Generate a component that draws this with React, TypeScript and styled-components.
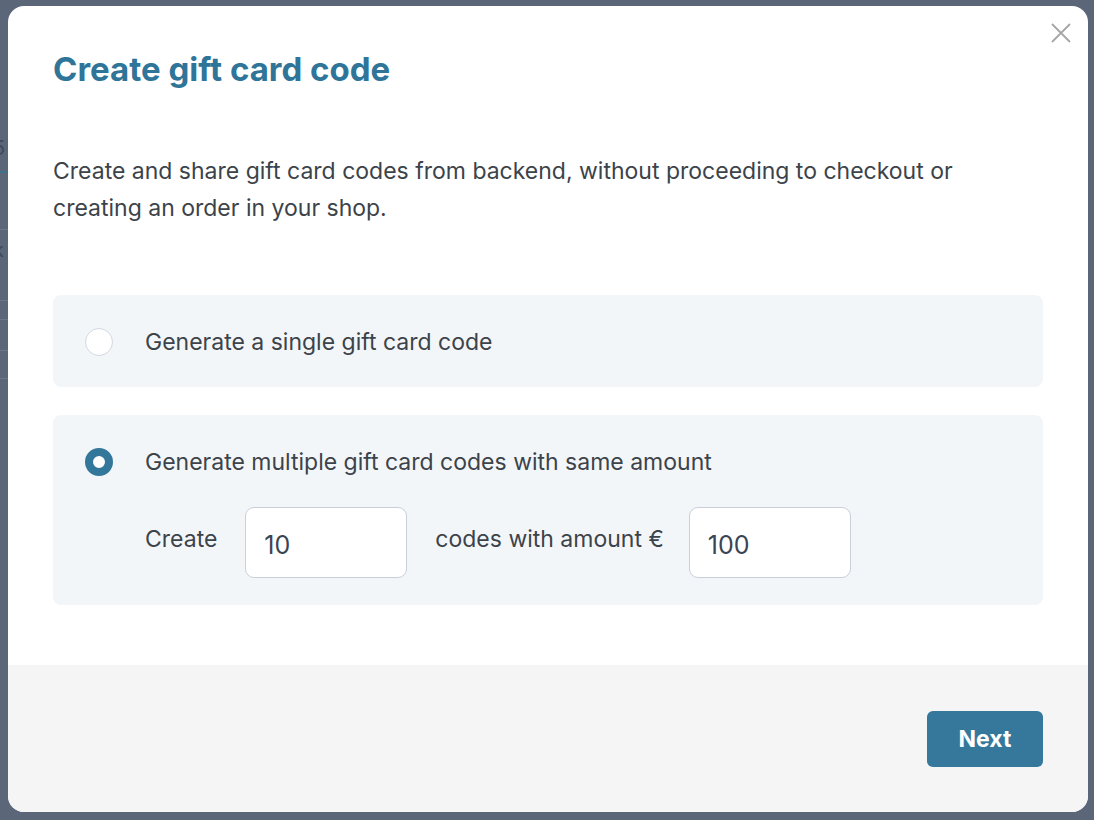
import React, { useState } from "react";
import styled, { createGlobalStyle } from "styled-components";

const GlobalStyle = createGlobalStyle`
  html, body {
    margin: 0;
    padding: 0;
    background: #5e6a7b;
    font-family: Inter, "Noto Sans", "Liberation Sans", sans-serif;
  }
  * { box-sizing: border-box; }
`;

const Backdrop = styled.div`
  width: 1094px;
  height: 820px;
  display: flex;
  flex-direction: row;
  align-items: flex-start;
  padding-top: 6px;
  background: #5b6779;
  overflow: hidden;
`;

const PageStrip = styled.div`
  width: 8px;
  flex-shrink: 0;
  display: flex;
  flex-direction: column;
  overflow: hidden;
  margin-top: 122px;
  color: #3f4a5a;
  font-size: 20px;
`;

const StripText = styled.span<{ $pad: number }>`
  display: block;
  margin-left: -7px;
  height: ${(p) => p.$pad}px;
  line-height: 40px;
`;

const StripLine = styled.div<{ $gap: number; $color?: string; $h?: number }>`
  margin-top: ${(p) => p.$gap}px;
  height: ${(p) => p.$h ?? 1}px;
  background: ${(p) => p.$color ?? "#6b7686"};
`;

const Modal = styled.div`
  width: 1080px;
  height: 806px;
  background: #ffffff;
  border-radius: 16px;
  display: flex;
  flex-direction: column;
  overflow: hidden;
  position: relative;
`;

const CloseButton = styled.button`
  position: absolute;
  top: 14px;
  right: 14px;
  width: 26px;
  height: 26px;
  padding: 0;
  border: none;
  background: transparent;
  display: flex;
  align-items: center;
  justify-content: center;
  cursor: pointer;
`;

const Body = styled.div`
  flex: 1;
  padding: 43px 45px 0 45px;
  display: flex;
  flex-direction: column;
`;

const Title = styled.h1`
  margin: 0;
  font-size: 33px;
  line-height: 40px;
  font-weight: 700;
  color: #2f7599;
`;

const Description = styled.p`
  margin: 64px 0 0 0;
  font-size: 23px;
  line-height: 37px;
  color: #3c434a;
  max-width: 930px;
`;

const Options = styled.div`
  margin-top: 68px;
  display: flex;
  flex-direction: column;
  gap: 28px;
`;

const OptionCard = styled.div`
  background: #f3f6f9;
  border-radius: 8px;
  padding: 33px 32px 31px 32px;
  display: flex;
  flex-direction: column;
  gap: 31px;
`;

const OptionRow = styled.label`
  display: flex;
  align-items: center;
  gap: 32px;
  cursor: pointer;
  font-size: 23px;
  line-height: 28px;
  color: #3c434a;
`;

const Radio = styled.span<{ $checked: boolean }>`
  width: 28px;
  height: 28px;
  border-radius: 50%;
  flex-shrink: 0;
  background: #ffffff;
  border: ${(p) => (p.$checked ? "8px solid #33779b" : "1px solid #d2d8e2")};
`;

const AmountRow = styled.div`
  display: flex;
  align-items: center;
  padding-left: 60px;
  margin-bottom: -4px;
  font-size: 23px;
  color: #3c434a;
  gap: 28px;
`;

const AmountLabel = styled.span<{ $tight?: boolean }>`
  margin-top: -8px;
  margin-right: ${(p) => (p.$tight ? "-3px" : "0")};
`;

const AmountInput = styled.input`
  width: 162px;
  height: 71px;
  border: 1px solid #c9cfdb;
  border-radius: 9px;
  background: #fff;
  padding: 4px 18px 0 18px;
  font-family: inherit;
  font-size: 25px;
  color: #3a4553;
  outline: none;
`;

const Footer = styled.div`
  height: 147px;
  background: #f5f5f5;
  display: flex;
  justify-content: flex-end;
  align-items: flex-start;
  padding: 46px 45px 0 0;
`;

const NextButton = styled.button`
  width: 116px;
  height: 56px;
  border: none;
  border-radius: 6px;
  background: #35789b;
  color: #fff;
  font-family: inherit;
  font-size: 23px;
  font-weight: 700;
  cursor: pointer;
`;

export default function App() {
  const [mode, setMode] = useState<"single" | "multiple">("multiple");
  const [count, setCount] = useState("10");
  const [amount, setAmount] = useState("100");

  return (
    <>
      <GlobalStyle />
      <Backdrop>
        <PageStrip>
          <StripText $pad={43}>5</StripText>
          <StripLine $gap={0} $color="#3f6f8f" $h={2} />
          <StripLine $gap={56} />
          <StripText $pad={50}>k</StripText>
          <StripLine $gap={20} />
          <StripLine $gap={18} />
          <StripLine $gap={30} />
          <StripLine $gap={27} />
        </PageStrip>
        <Modal>
          <CloseButton aria-label="Close">
            <svg width="20" height="20" viewBox="0 0 20 20">
              <path d="M1 1 L19 19 M19 1 L1 19" stroke="#a6a6a6" strokeWidth="1.8" />
            </svg>
          </CloseButton>
          <Body>
            <Title>Create gift card code</Title>
            <Description>
              Create and share gift card codes from backend, without proceeding to checkout or
              creating an order in your shop.
            </Description>
            <Options>
              <OptionCard>
                <OptionRow onClick={() => setMode("single")}>
                  <Radio $checked={mode === "single"} />
                  Generate a single gift card code
                </OptionRow>
              </OptionCard>
              <OptionCard>
                <OptionRow onClick={() => setMode("multiple")}>
                  <Radio $checked={mode === "multiple"} />
                  Generate multiple gift card codes with same amount
                </OptionRow>
                <AmountRow>
                  <AmountLabel>Create</AmountLabel>
                  <AmountInput value={count} onChange={(e) => setCount(e.target.value)} />
                  <AmountLabel $tight>codes with amount €</AmountLabel>
                  <AmountInput value={amount} onChange={(e) => setAmount(e.target.value)} />
                </AmountRow>
              </OptionCard>
            </Options>
          </Body>
          <Footer>
            <NextButton>Next</NextButton>
          </Footer>
        </Modal>
      </Backdrop>
    </>
  );
}
